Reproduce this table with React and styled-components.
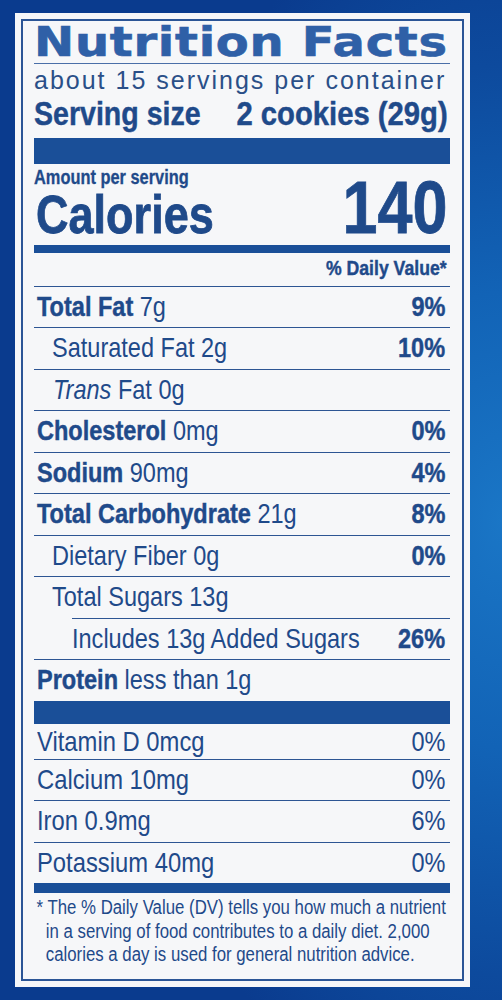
import React from "react";
import styled, { createGlobalStyle, css } from "styled-components";

const GlobalStyle = createGlobalStyle`
  html, body {
    margin: 0;
    padding: 0;
  }
  body {
    background: #0b3b8f;
  }
`;

const INK = "#1f4a8a";
const BAR = "#1a4f98";

/* the label face is a heavy condensed grotesque; thicken the bold a touch */
const heavy = css`
  font-weight: 700;
  -webkit-text-stroke: 0.45px currentColor;
`;

const Page = styled.div`
  width: 502px;
  height: 1000px;
  box-sizing: border-box;
  padding: 13px 0 0 15px;
  background: radial-gradient(
    ellipse 75% 65% at 100% 52%,
    #1a76c6 0%,
    #1263b6 35%,
    #0d4a9d 70%,
    #0a3b8e 100%
  );
  overflow: hidden;
`;

const Panel = styled.div`
  width: 455px;
  box-sizing: border-box;
  padding: 6px;
  background: #f6f7f9;
`;

const Inner = styled.div`
  border: 2px solid #2b5596;
  padding: 0 12px 12px 11px;
  color: ${INK};
  font-family: "Liberation Sans", Arial, sans-serif;
`;

/* condensed look: squeeze Liberation Sans horizontally */
const Narrow = styled.span`
  display: inline-block;
  white-space: nowrap;
  transform: scaleX(${(p) => p.$sx || 0.84});
  transform-origin: ${(p) => (p.$end ? "right" : "left")} center;
`;

const Title = styled.h1`
  margin: 0;
  padding-top: 1px;
  height: 41px;
  line-height: 41px;
  font-family: "DejaVu Sans", "Liberation Sans", sans-serif;
  font-weight: 700;
  font-size: 40px;
  letter-spacing: 0.6px;
  -webkit-text-stroke: 0.6px currentColor;
  color: #2f60a7;
  white-space: nowrap;
  border-bottom: 1.5px solid #4a6fa8;
`;

const Servings = styled.div`
  height: 33px;
  line-height: 33px;
  font-size: 25px;
  letter-spacing: 2px;
  white-space: nowrap;
  color: #2a4f88;
`;

const ServingSize = styled.div`
  display: grid;
  grid-template-columns: minmax(0, 1fr) auto;
  line-height: 32px;
  padding: 0 2px 8.5px 0;
  font-size: 34px;
  ${heavy}
`;

const Bar = styled.div`
  height: ${(p) => p.$h}px;
  background: ${BAR};
`;

const CalorieBlock = styled.div`
  display: grid;
  grid-template-columns: minmax(0, 1fr) auto;
  align-items: end;
  padding: 0 3px 4px 0;
  ${heavy}
`;

const CalorieLeft = styled.div`
  display: flex;
  flex-direction: column;
  align-items: flex-start;
`;

const AmountLabel = styled.div`
  padding-top: 2px;
  line-height: 22px;
  font-size: 19.5px;
  -webkit-text-stroke: 0.3px currentColor;
`;

const CaloriesLabel = styled.div`
  padding-left: 2px;
  line-height: 53px;
  font-size: 53px;
  -webkit-text-stroke: 0.8px currentColor;
`;

const CaloriesValue = styled.div`
  line-height: 67px;
  font-size: 74px;
  -webkit-text-stroke: 0.8px currentColor;
`;

const DVHeader = styled.div`
  text-align: right;
  line-height: 30px;
  padding: 0 3px 3px 0;
  font-size: 21px;
  ${heavy}
`;

const Row = styled.div`
  display: grid;
  grid-template-columns: minmax(0, 1fr) auto;
  align-items: center;
  height: ${(p) => p.$h || 40.5}px;
  line-height: ${(p) => p.$h || 40.5}px;
  padding: 0 5px 0 ${(p) => p.$indent ?? 3}px;
  margin-left: ${(p) => p.$shift || 0}px;
  border-top: ${(p) => (p.$noLine ? "none" : `1.5px solid #2d5593`)};
  font-size: 28px;
  white-space: nowrap;
`;

const Strong = styled.span`
  ${heavy}
`;

const Em = styled.span`
  font-style: italic;
`;

const Pct = styled(Narrow)`
  ${(p) => (p.$light ? "font-weight: 400;" : heavy)}
`;

const Footnote = styled.p`
  margin: 0;
  padding: 3px 0 0 3px;
  font-size: 20px;
  line-height: 23.5px;
  white-space: nowrap;
  transform: scaleX(0.84);
  transform-origin: left top;
`;

const Hang = styled.span`
  display: block;
  padding-left: ${(p) => (p.$first ? 0 : 11)}px;
`;

const nutrients = [
  { bold: "Total Fat", rest: " 7g", pct: "9%" },
  { rest: "Saturated Fat 2g", pct: "10%", indent: 18 },
  { italic: "Trans", rest: " Fat 0g", indent: 19 },
  { bold: "Cholesterol", rest: " 0mg", pct: "0%" },
  { bold: "Sodium", rest: " 90mg", pct: "4%" },
  { bold: "Total Carbohydrate", rest: " 21g", pct: "8%" },
  { rest: "Dietary Fiber 0g", pct: "0%", indent: 18 },
  { rest: "Total Sugars 13g", indent: 18 },
  { rest: "Includes 13g Added Sugars", pct: "26%", indent: 0, shift: 38 },
  { bold: "Protein", rest: " less than 1g" },
];

const vitamins = [
  { name: "Vitamin D 0mcg", pct: "0%" },
  { name: "Calcium 10mg", pct: "0%" },
  { name: "Iron 0.9mg", pct: "6%" },
  { name: "Potassium 40mg", pct: "0%" },
];

export default function App() {
  return (
    <>
      <GlobalStyle />
      <Page>
        <Panel>
          <Inner>
            <Title>
              <Narrow $sx={1.2}>Nutrition Facts</Narrow>
            </Title>
            <Servings>about 15 servings per container</Servings>
            <ServingSize>
              <Narrow>Serving size</Narrow>
              <Narrow $end $sx={0.86}>2 cookies (29g)</Narrow>
            </ServingSize>
            <Bar $h={26} />
            <CalorieBlock>
              <CalorieLeft>
                <AmountLabel>
                  <Narrow>Amount per serving</Narrow>
                </AmountLabel>
                <CaloriesLabel>
                  <Narrow $sx={0.85}>Calories</Narrow>
                </CaloriesLabel>
              </CalorieLeft>
              <CaloriesValue>
                <Narrow $end $sx={0.85}>140</Narrow>
              </CaloriesValue>
            </CalorieBlock>
            <Bar $h={8} />
            <DVHeader>
              <Narrow $end>% Daily Value*</Narrow>
            </DVHeader>
            {nutrients.map((n, i) => (
              <Row key={i} $indent={n.indent} $shift={n.shift}>
                <span>
                  <Narrow>
                    {n.bold && <Strong>{n.bold}</Strong>}
                    {n.italic && <Em>{n.italic}</Em>}
                    {n.rest}
                  </Narrow>
                </span>
                {n.pct ? <Pct $end>{n.pct}</Pct> : <span />}
              </Row>
            ))}
            <Bar $h={23} />
            {vitamins.map((v, i) => (
              <Row key={v.name} $noLine={i === 0} $h={i === 0 ? 35 : 40.5}>
                <span>
                  <Narrow $sx={0.85}>{v.name}</Narrow>
                </span>
                <Pct $end $light>{v.pct}</Pct>
              </Row>
            ))}
            <Bar $h={10} />
            <Footnote>
              <Hang $first>* The % Daily Value (DV) tells you how much a nutrient</Hang>
              <Hang>in a serving of food contributes to a daily diet. 2,000</Hang>
              <Hang>calories a day is used for general nutrition advice.</Hang>
            </Footnote>
          </Inner>
        </Panel>
      </Page>
    </>
  );
}
